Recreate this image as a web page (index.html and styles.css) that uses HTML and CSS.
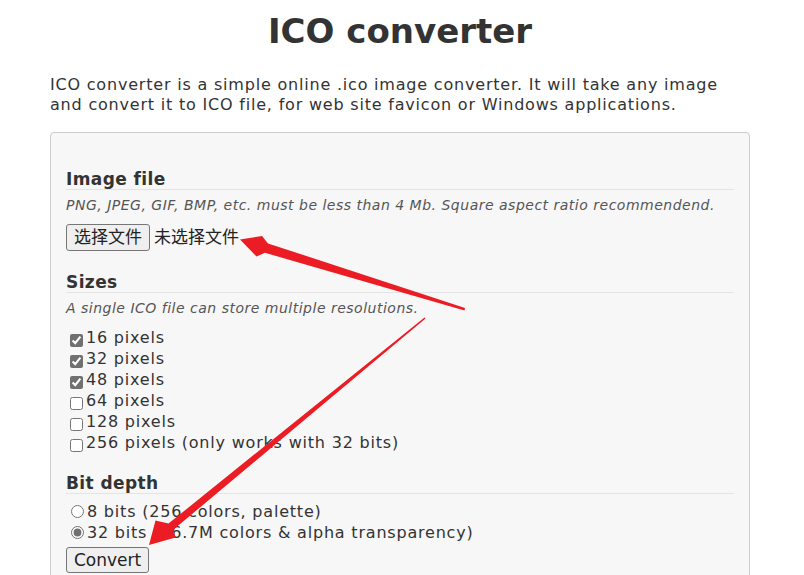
FILE: index.html
```html
<!DOCTYPE html>
<html lang="en">
<head>
<meta charset="utf-8">
<title>ICO converter</title>
<link rel="stylesheet" href="styles.css">
</head>
<body>
<div class="wrap">
  <h1 class="title">ICO converter</h1>
  <p class="intro">ICO converter is a simple online .ico image converter. It will take any image and convert it to ICO file, for web site favicon or Windows applications.</p>
  <form class="panel">
    <h3 class="section-title">Image file</h3>
    <p class="hint">PNG, JPEG, GIF, BMP, etc. must be less than 4 Mb. Square aspect ratio recommendend.</p>
    <div class="file-row">
      <button type="button" class="btn btn-file">选择文件</button>
      <span class="file-name">未选择文件</span>
    </div>

    <h3 class="section-title section-gap">Sizes</h3>
    <p class="hint">A single ICO file can store multiple resolutions.</p>
    <div class="checks">
      <label class="row"><input type="checkbox" class="cb" checked><span>16 pixels</span></label>
      <label class="row"><input type="checkbox" class="cb" checked><span>32 pixels</span></label>
      <label class="row"><input type="checkbox" class="cb" checked><span>48 pixels</span></label>
      <label class="row"><input type="checkbox" class="cb"><span>64 pixels</span></label>
      <label class="row"><input type="checkbox" class="cb"><span>128 pixels</span></label>
      <label class="row"><input type="checkbox" class="cb"><span>256 pixels (only works with 32 bits)</span></label>
    </div>

    <h3 class="section-title section-gap2">Bit depth</h3>
    <div class="radios">
      <label class="row"><input type="radio" name="bpp" class="rd"><span>8 bits (256 colors, palette)</span></label>
      <label class="row"><input type="radio" name="bpp" class="rd" checked><span>32 bits (16.7M colors &amp; alpha transparency)</span></label>
    </div>
    <button type="button" class="btn btn-convert">Convert</button>
  </form>
</div>
<svg class="arrows" width="804" height="575" viewBox="0 0 804 575" aria-hidden="true">
  <polygon class="arrow" points="240,239.5 262,236 268,243.4 465,308 464.5,310.5 265,252.8 256.5,256.5"/>
  <polygon class="arrow" points="149,545 155.5,520.5 168.5,523.6 424.5,317.4 425.5,318.6 173.5,529.6 175.5,537.5"/>
</svg>
</body>
</html>
```
FILE: styles.css
```css
html, body {
  margin: 0;
  padding: 0;
  background: #ffffff;
}
body {
  font-family: "DejaVu Sans", Verdana, sans-serif;
  color: #333333;
  overflow: hidden;
}
.wrap {
  width: 700px;
  margin-left: 50px;
}
.title {
  margin: 11px 0 0;
  font-size: 34px;
  line-height: 40px;
  font-weight: bold;
  text-align: center;
  color: #333333;
}
.intro {
  margin: 24px 0 0;
  font-size: 16px;
  line-height: 20px;
  letter-spacing: 0.8px;
}
.panel {
  margin-top: 17px;
  border: 1px solid #cccccc;
  border-radius: 4px;
  background: #f7f7f7;
  padding: 36px 15px 30px;
}
.section-title {
  margin: 0;
  font-size: 17px;
  line-height: 20px;
  font-weight: bold;
  letter-spacing: 0.4px;
  border-bottom: 1px solid #e4e4e4;
}
.section-gap {
  margin-top: 21px;
}
.section-gap2 {
  margin-top: 20px;
}
.hint {
  margin: 6px 0 0;
  font-size: 14px;
  line-height: 18px;
  font-style: italic;
  letter-spacing: 0.5px;
  color: #555555;
}
.file-row {
  margin-top: 10px;
  display: flex;
  align-items: center;
}
.btn {
  box-sizing: border-box;
  background: #efefef;
  border: 1px solid #767676;
  border-radius: 3px;
  color: #222222;
  margin: 0;
}
.btn-file {
  height: 27px;
  padding: 0 7px;
  font-family: "DejaVu Sans", "Noto Sans CJK SC", sans-serif;
  font-size: 17px;
  line-height: 25px;
}
.file-name {
  margin-left: 4px;
  font-family: "DejaVu Sans", "Noto Sans CJK SC", sans-serif;
  font-size: 17px;
  line-height: 27px;
  color: #222222;
}
.checks {
  margin-top: 10px;
}
.radios {
  margin-top: 7px;
}
.row {
  display: flex;
  align-items: flex-start;
  height: 21px;
  font-size: 16px;
  line-height: 21px;
  letter-spacing: 0.8px;
}
.cb {
  width: 13px;
  height: 13px;
  margin: 7px 3px 0 4px;
  accent-color: #707070;
  flex: none;
}
.rd {
  width: 13px;
  height: 13px;
  margin: 4px 3px 0 5px;
  accent-color: #707070;
  flex: none;
}
.btn-convert {
  margin-top: 4px;
  height: 26px;
  padding: 0 7px;
  font-family: "DejaVu Sans", Verdana, sans-serif;
  font-size: 17px;
  line-height: 24px;
}
.arrows {
  position: absolute;
  left: 0;
  top: 0;
  pointer-events: none;
}
.arrow {
  fill: #ec1c24;
}
```
